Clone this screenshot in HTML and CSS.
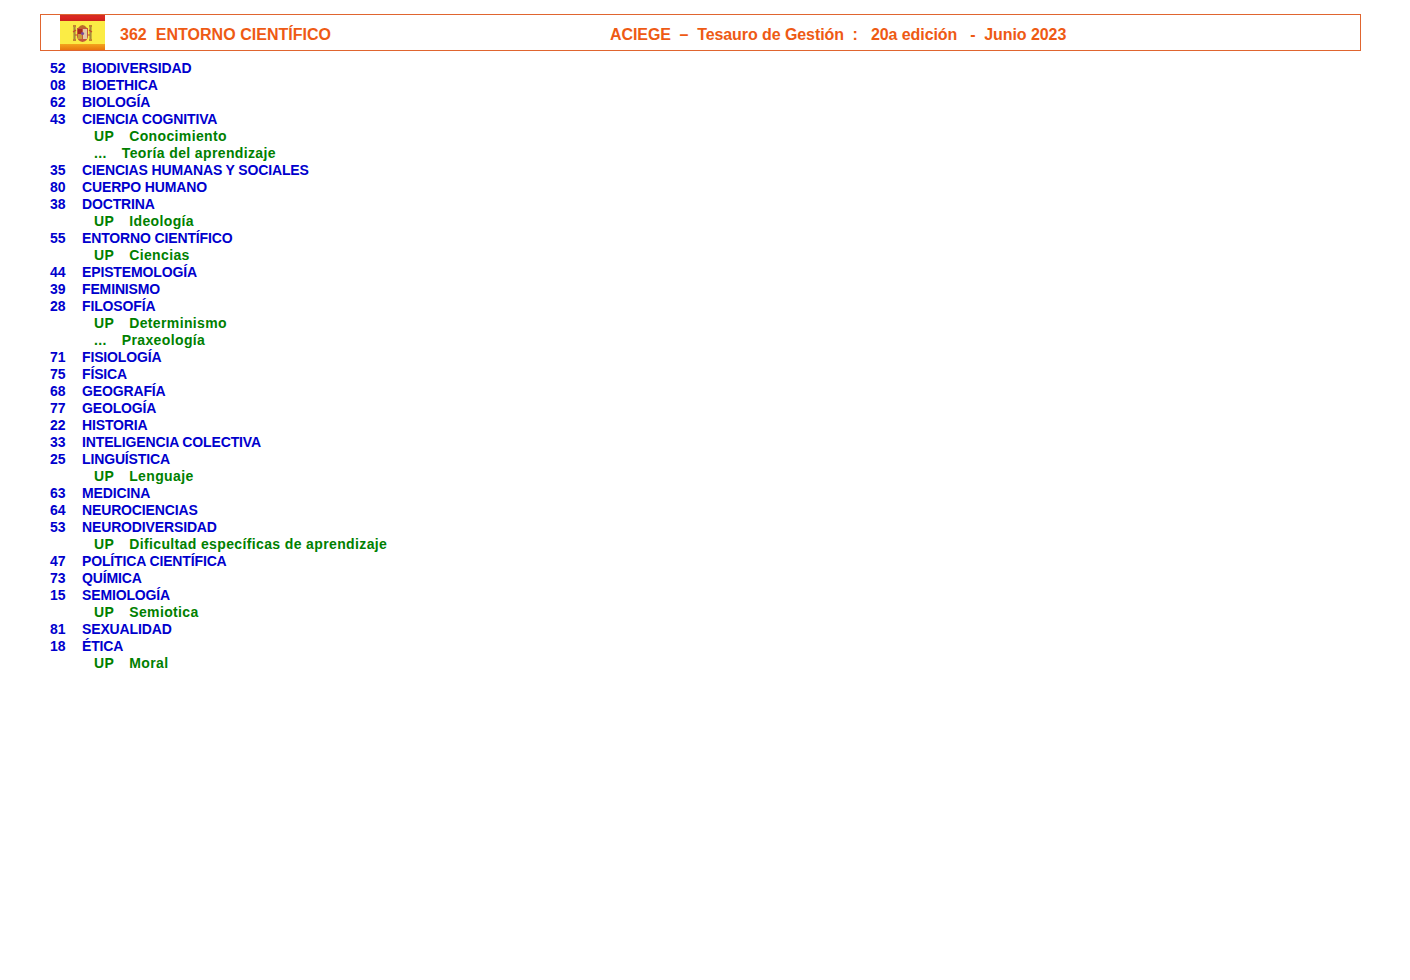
FILE: index.html
```html
<!DOCTYPE html>
<html lang="es">
<head>
<meta charset="utf-8">
<title>362 ENTORNO CIENTÍFICO</title>
<link rel="stylesheet" href="styles.css">
</head>
<body>
<header class="banner">
  <svg class="flag" width="45" height="35" viewBox="0 0 45 35" aria-hidden="true">
    <defs>
      <linearGradient id="bandRed" x1="0" y1="0" x2="0" y2="1">
        <stop offset="0" stop-color="#c9302a"/>
        <stop offset="0.35" stop-color="#e0261f"/>
        <stop offset="1" stop-color="#c8231c"/>
      </linearGradient>
      <linearGradient id="bandOrange" x1="0" y1="0" x2="0" y2="1">
        <stop offset="0" stop-color="#f3a51c"/>
        <stop offset="1" stop-color="#e9760f"/>
      </linearGradient>
    </defs>
    <rect width="45" height="35" fill="#fbec45"/>
    <rect width="45" height="6" fill="url(#bandRed)"/>
    <rect y="29" width="45" height="6" fill="url(#bandOrange)"/>
    <path d="M18 13 Q22.500 7 27 13 Z" fill="#b8692c"/>
    <path d="M17 13 H28 V21 Q28 26 22.500 27 Q17 26 17 21 Z" fill="#c4573a"/>
    <rect x="23" y="14" width="4" height="10" fill="#e4c9a6"/>
    <rect x="18" y="14" width="4" height="5" fill="#a5281c"/>
    <rect x="18" y="19" width="4" height="5" fill="#c99a3a"/>
    <circle cx="22.500" cy="18.500" r="1.600" fill="#7a4a9a"/>
    <path d="M14.500 12 V24 M30.500 12 V24" stroke="#a58a3c" stroke-width="2.200"/>
    <path d="M13 11 H16 M29 11 H32 M13 25 H16 M29 25 H32" stroke="#b0622a" stroke-width="1.600"/>
    <path d="M13 17 L16 15 M29 15 L32 17" stroke="#c44a2a" stroke-width="1.200"/>
    <path d="M15 20 H17 M28 20 H30" stroke="#c44a2a" stroke-width="1"/>
  </svg>
  <h1 class="title title-main">362  ENTORNO CIENTÍFICO</h1>
  <p class="title title-edition">ACIEGE  –  Tesauro de Gestión  :   20a edición   -  Junio 2023</p>
</header>
<main class="list">
  <div class="term"><span class="num">52</span><a>BIODIVERSIDAD</a></div>
  <div class="term"><span class="num">08</span><a>BIOETHICA</a></div>
  <div class="term"><span class="num">62</span><a>BIOLOGÍA</a></div>
  <div class="term"><span class="num">43</span><a>CIENCIA COGNITIVA</a></div>
  <div class="rel"><span>UP</span><a>Conocimiento</a></div>
  <div class="rel"><span>...</span><a>Teoría del aprendizaje</a></div>
  <div class="term"><span class="num">35</span><a>CIENCIAS HUMANAS Y SOCIALES</a></div>
  <div class="term"><span class="num">80</span><a>CUERPO HUMANO</a></div>
  <div class="term"><span class="num">38</span><a>DOCTRINA</a></div>
  <div class="rel"><span>UP</span><a>Ideología</a></div>
  <div class="term"><span class="num">55</span><a>ENTORNO CIENTÍFICO</a></div>
  <div class="rel"><span>UP</span><a>Ciencias</a></div>
  <div class="term"><span class="num">44</span><a>EPISTEMOLOGÍA</a></div>
  <div class="term"><span class="num">39</span><a>FEMINISMO</a></div>
  <div class="term"><span class="num">28</span><a>FILOSOFÍA</a></div>
  <div class="rel"><span>UP</span><a>Determinismo</a></div>
  <div class="rel"><span>...</span><a>Praxeología</a></div>
  <div class="term"><span class="num">71</span><a>FISIOLOGÍA</a></div>
  <div class="term"><span class="num">75</span><a>FÍSICA</a></div>
  <div class="term"><span class="num">68</span><a>GEOGRAFÍA</a></div>
  <div class="term"><span class="num">77</span><a>GEOLOGÍA</a></div>
  <div class="term"><span class="num">22</span><a>HISTORIA</a></div>
  <div class="term"><span class="num">33</span><a>INTELIGENCIA COLECTIVA</a></div>
  <div class="term"><span class="num">25</span><a>LINGUÍSTICA</a></div>
  <div class="rel"><span>UP</span><a>Lenguaje</a></div>
  <div class="term"><span class="num">63</span><a>MEDICINA</a></div>
  <div class="term"><span class="num">64</span><a>NEUROCIENCIAS</a></div>
  <div class="term"><span class="num">53</span><a>NEURODIVERSIDAD</a></div>
  <div class="rel"><span>UP</span><a>Dificultad específicas de aprendizaje</a></div>
  <div class="term"><span class="num">47</span><a>POLÍTICA CIENTÍFICA</a></div>
  <div class="term"><span class="num">73</span><a>QUÍMICA</a></div>
  <div class="term"><span class="num">15</span><a>SEMIOLOGÍA</a></div>
  <div class="rel"><span>UP</span><a>Semiotica</a></div>
  <div class="term"><span class="num">81</span><a>SEXUALIDAD</a></div>
  <div class="term"><span class="num">18</span><a>ÉTICA</a></div>
  <div class="rel"><span>UP</span><a>Moral</a></div>
</main>
</body>
</html>
```
FILE: styles.css
```css
html, body {
  margin: 0;
  padding: 0;
  background: #fff;
}
body {
  font-family: "Liberation Sans", Arial, sans-serif;
  font-weight: 700;
  font-size: 14px;
  padding: 14px 49px 0 40px;
}
.banner {
  display: flex;
  align-items: center;
  height: 37px;
  box-sizing: border-box;
  border: 1px solid #e0652f;
  padding-left: 19px;
}
.flag {
  display: block;
  flex: none;
}
.title {
  margin: 0;
  padding-top: 4px;
  font-size: 16px;
  font-weight: 700;
  color: #ee5a14;
  white-space: pre;
}
.title-main {
  width: 490px;
  margin-left: 15px;
  flex: none;
  letter-spacing: 0.03px;
}
.title-edition {
  letter-spacing: -0.08px;
}
.list {
  padding: 9px 0 0 10px;
  line-height: 17px;
}
.term, .rel {
  display: flex;
  height: 17px;
}
.term {
  color: #0000cd;
}
.term a {
  letter-spacing: -0.14px;
}
.term .num {
  width: 32px;
  flex: none;
}
.rel {
  color: #008000;
  padding-left: 44px;
  column-gap: 15px;
  letter-spacing: 0.37px;
}
```
